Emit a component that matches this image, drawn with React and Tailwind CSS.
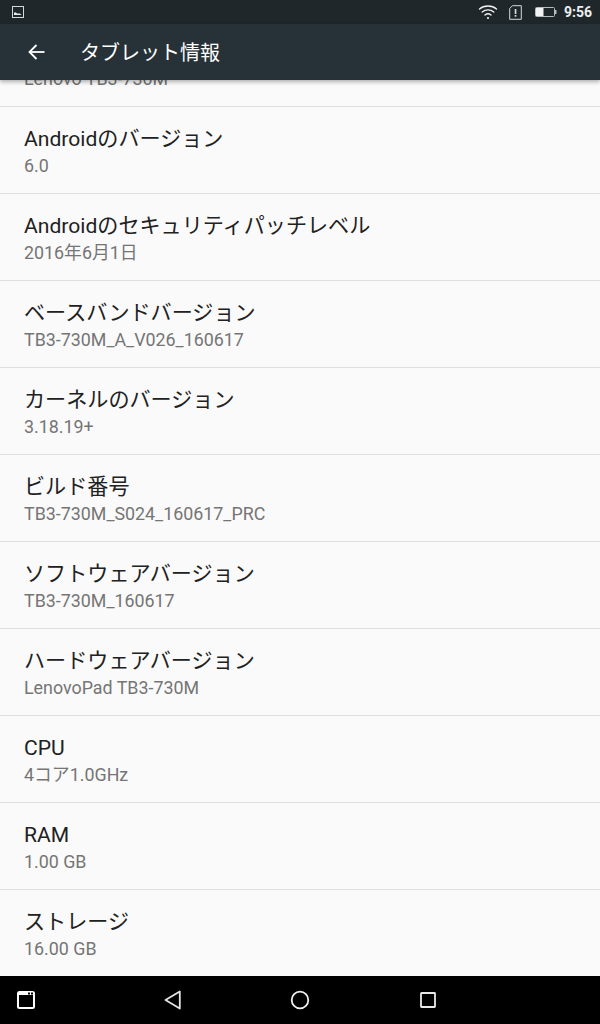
const rows = [
  { title: "モデル番号", value: "Lenovo TB3-730M" },
  { title: "Androidのバージョン", value: "6.0" },
  { title: "Androidのセキュリティパッチレベル", value: "2016年6月1日" },
  { title: "ベースバンドバージョン", value: "TB3-730M_A_V026_160617" },
  { title: "カーネルのバージョン", value: "3.18.19+" },
  { title: "ビルド番号", value: "TB3-730M_S024_160617_PRC" },
  { title: "ソフトウェアバージョン", value: "TB3-730M_160617" },
  { title: "ハードウェアバージョン", value: "LenovoPad TB3-730M" },
  { title: "CPU", value: "4コア1.0GHz" },
  { title: "RAM", value: "1.00 GB" },
  { title: "ストレージ", value: "16.00 GB" },
];

function StatusBar() {
  return (
    <div className="h-6 shrink-0 bg-[#1f272b] flex items-center justify-between pl-3 pr-2 text-white">
      <svg width="12" height="12" viewBox="0 0 12 12">
        <rect x="0.5" y="0.5" width="11" height="11" fill="none" stroke="#d5d7d8" />
        <path d="M2 9V6.5h2L5 7.500h3l1.500 1.500z" fill="#e8e9ea" />
      </svg>
      <div className="flex items-center">
        <svg width="20" height="16" viewBox="0 0 20 16" fill="none" stroke="#f0f0f0" strokeWidth="1.400" strokeLinecap="round">
          <path d="M1.500 5C6 1 14 1 18.500 5" />
          <path d="M4.200 8C7.500 5.200 12.500 5.200 15.800 8" />
          <path d="M7 11C8.800 9.600 11.200 9.600 13 11" />
          <circle cx="10" cy="14" r="1.100" fill="#f0f0f0" stroke="none" />
        </svg>
        <svg className="ml-[11px]" width="13" height="15" viewBox="0 0 13 15" fill="none">
          <path d="M3.500 0.700H12.300V14.300H0.700V3.500z" stroke="#d8d9da" strokeWidth="1" />
          <rect x="5.700" y="4" width="1.700" height="5" fill="#d8d9da" />
          <rect x="5.700" y="10" width="1.700" height="1.700" fill="#d8d9da" />
        </svg>
        <svg className="ml-[13px]" width="22" height="12" viewBox="0 0 22 12" fill="none">
          <rect x="0.500" y="1.500" width="19" height="9" rx="1" stroke="#b9bbbc" />
          <rect x="1" y="2" width="7.500" height="8" fill="#f2f2f2" />
          <rect x="20" y="4" width="1.500" height="4" fill="#b9bbbc" />
        </svg>
        <span className="ml-[7px] text-[14px] font-bold font-['Roboto',sans-serif] text-[#eeeeee]">9:56</span>
      </div>
    </div>
  );
}

function Toolbar() {
  return (
    <div className="relative z-10 h-14 shrink-0 bg-[#263238] flex items-center shadow-[0_2px_4px_rgba(0,0,0,0.3)]">
      <svg className="ml-[28px]" width="17" height="16" viewBox="0 0 17 16" fill="none" stroke="#ffffff" strokeWidth="1.800">
        <path d="M16.500 8H1.500" />
        <path d="M8.500 1L1.500 8l7 7" />
      </svg>
      <h1 className="ml-[35px] pt-[2px] text-[20px] text-white font-['Roboto','Noto_Sans_CJK_JP',sans-serif]">タブレット情報</h1>
    </div>
  );
}

function NavBar() {
  return (
    <div className="h-12 shrink-0 bg-black flex items-center relative">
      <svg className="ml-[17px]" width="18" height="18" viewBox="0 0 18 18" fill="none">
        <rect x="1" y="1" width="16" height="16" rx="1.500" stroke="#ffffff" strokeWidth="2" />
        <rect x="1" y="1" width="16" height="3" fill="#ffffff" />
        <rect x="11" y="1.500" width="2" height="2" fill="#000000" />
        <rect x="14" y="1.500" width="2" height="2" fill="#000000" />
      </svg>
      <svg className="ml-[129px]" width="17" height="20" viewBox="0 0 17 20" fill="none">
        <path d="M15.800 1.500V18.500L1.500 10z" stroke="#e4e4e4" strokeWidth="1.800" strokeLinejoin="round" />
      </svg>
      <svg className="ml-[109px]" width="20" height="20" viewBox="0 0 20 20" fill="none">
        <circle cx="10" cy="10" r="8.300" stroke="#f0f0f0" strokeWidth="1.800" />
      </svg>
      <svg className="ml-[110px]" width="16" height="16" viewBox="0 0 16 16" fill="none">
        <rect x="1" y="1" width="14" height="14" rx="0.500" stroke="#e8e8e8" strokeWidth="1.800" />
      </svg>
    </div>
  );
}

export default function App() {
  return (
    <div className="w-[600px] h-[1024px] flex flex-col overflow-hidden bg-[#fafafa] font-['Roboto','Noto_Sans_CJK_JP',sans-serif]">
      <StatusBar />
      <Toolbar />
      <div className="flex-1 overflow-hidden">
        <ul className="-mt-[60px]">
          {rows.map((row) => (
            <li key={row.title} className="h-[87px] px-6 pt-[17px] border-b border-[#dfdfdf] last:border-b-0">
              <div className="text-[21.1px] leading-[30px] text-[#212121]">{row.title}</div>
              <div className="text-[17.85px] leading-[23px] text-[#757575]">{row.value}</div>
            </li>
          ))}
        </ul>
      </div>
      <NavBar />
    </div>
  );
}
